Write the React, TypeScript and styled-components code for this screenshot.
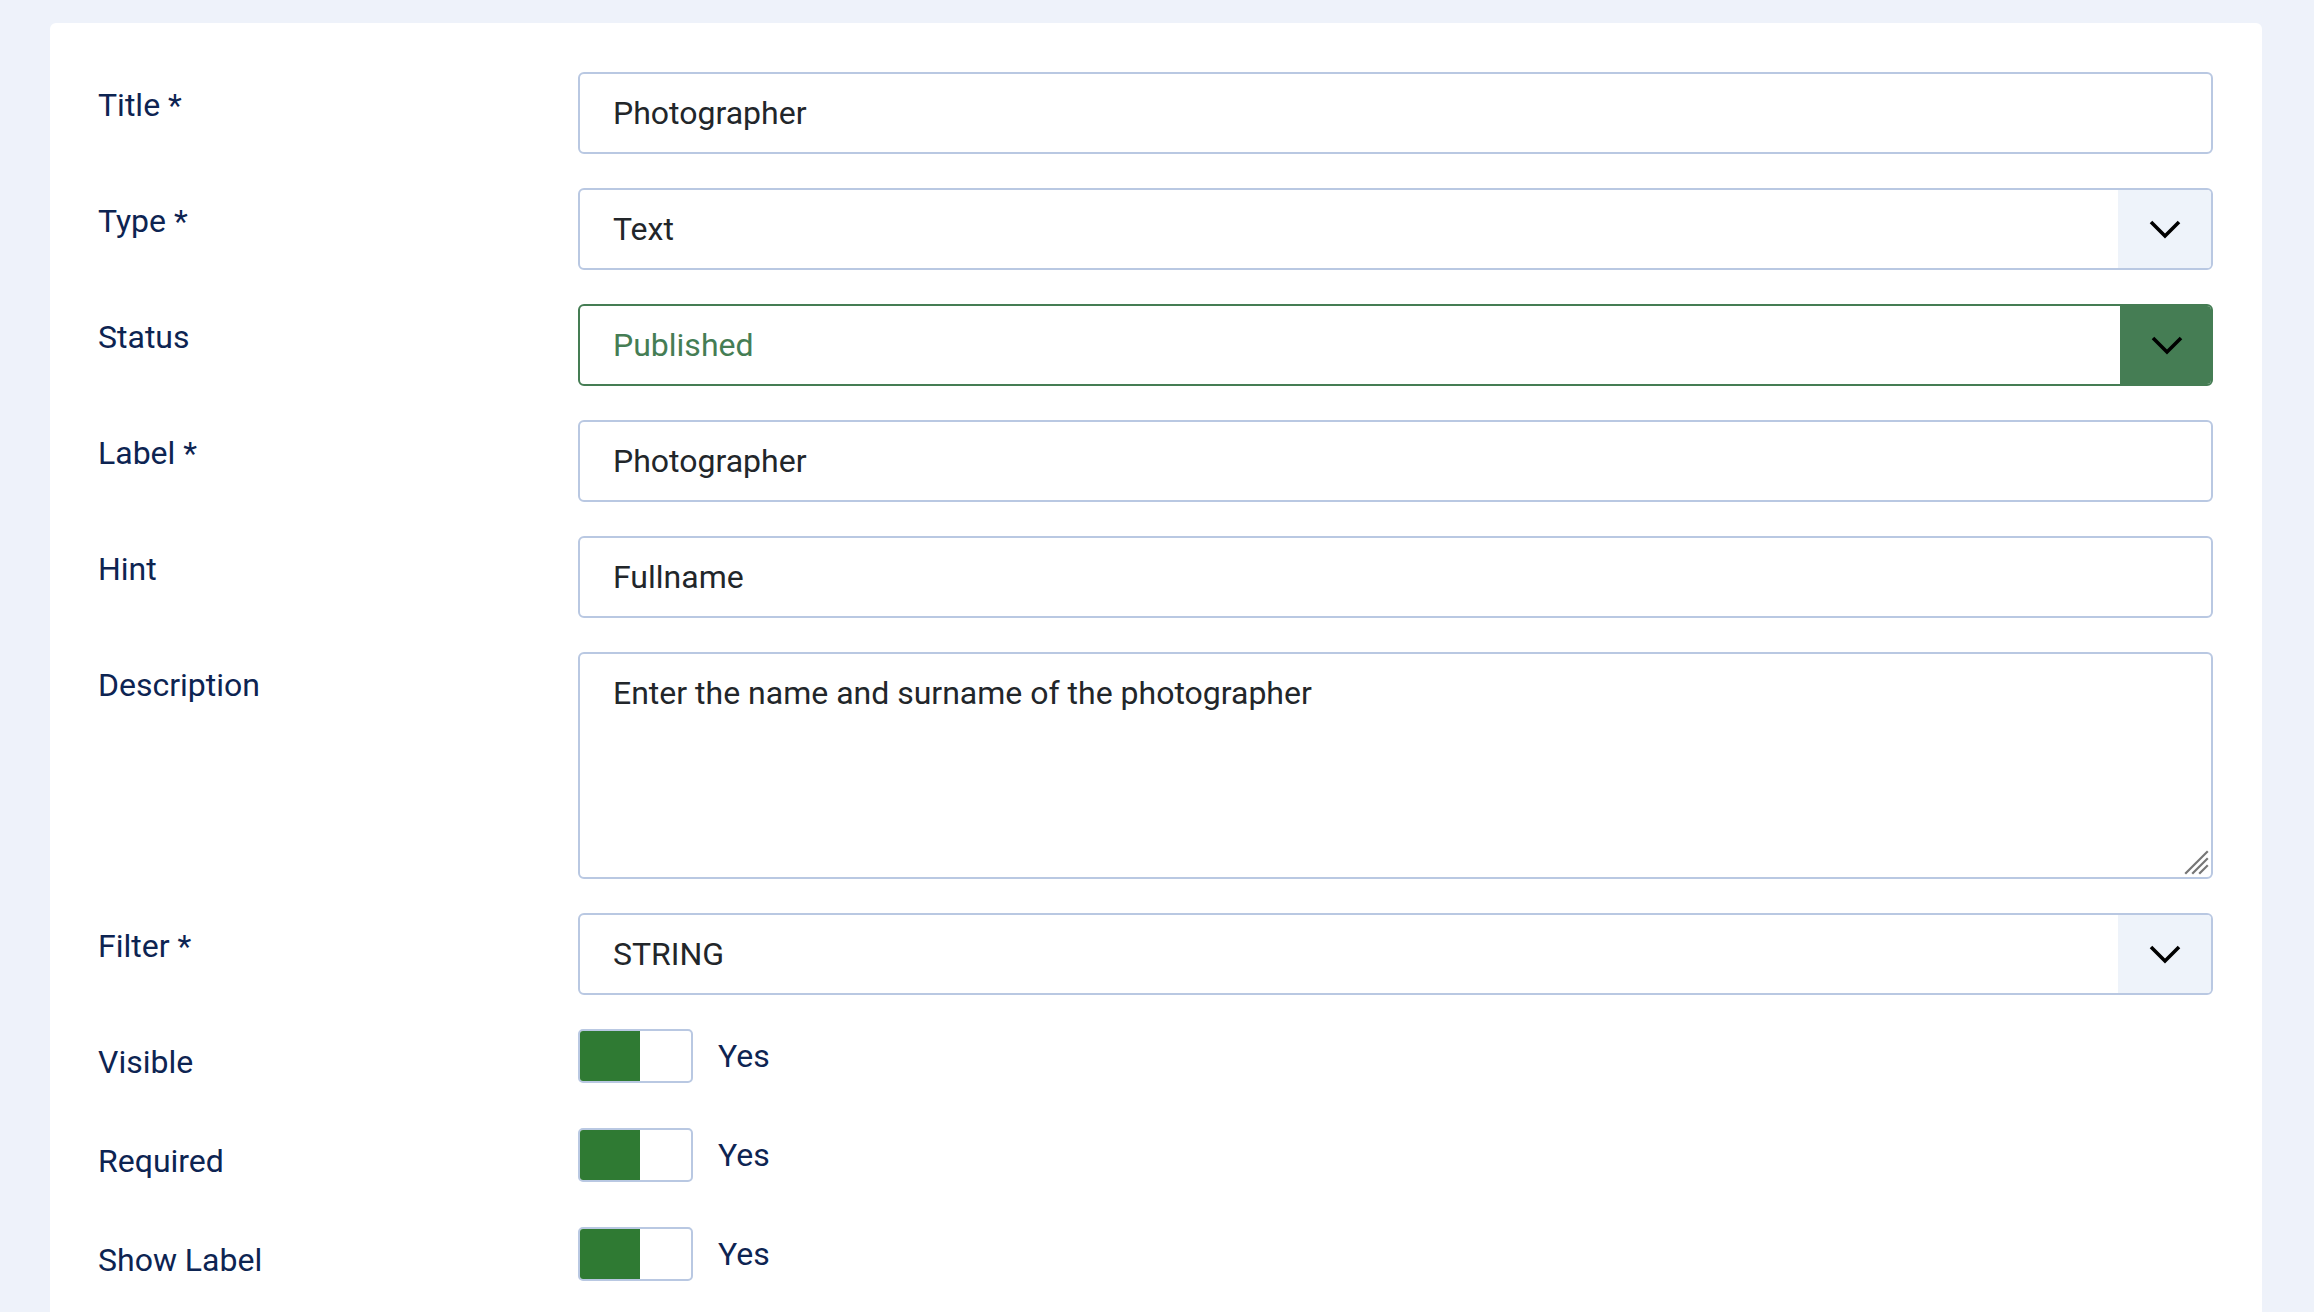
import React from 'react'
import styled, { createGlobalStyle } from 'styled-components';

const GlobalStyle = createGlobalStyle`
	html, body {
		margin: 0;
		padding: 0;
		background: #eef2fa;
		font-family: Roboto, "Liberation Sans", sans-serif;
	}
	* {
		box-sizing: border-box;
	}
`;

const Page = styled.div`
	padding: 23px 52px 0 50px;
	min-height: 1312px;
`;

const Card = styled.div`
	background: #fff;
	border-radius: 6px 6px 0 0;
	padding: 49px 49px 40px 48px;
	min-height: 1289px;
`;

const Row = styled.div`
	display: grid;
	grid-template-columns: 480px 1fr;
	margin-bottom: 34px;
`;

const Label = styled.label`
	font-size: 32px;
	line-height: 48px;
	color: #0d2452;
	padding-top: 9px;
`;

const Input = styled.input`
	width: 100%;
	height: 82px;
	border: 2px solid #b9c8e2;
	border-radius: 6px;
	padding: 15px 33px;
	font-family: inherit;
	font-size: 32px;
	line-height: 48px;
	color: #22262a;
	background: #fff;
	outline: none;
`;

const AreaWrap = styled.div`
	position: relative;
`;

const TextArea = styled.textarea`
	display: block;
	width: 100%;
	height: 227px;
	border: 2px solid #b9c8e2;
	border-radius: 6px;
	padding: 15px 33px;
	font-family: inherit;
	font-size: 32px;
	line-height: 48px;
	color: #22262a;
	background: #fff;
	outline: none;
	resize: none;
`;

const Grip = styled.svg`
	position: absolute;
	right: 4px;
	bottom: 4px;
	pointer-events: none;
`;

const SelectBox = styled.div<{ $active?: boolean }>`
	display: flex;
	height: 82px;
	border: 2px solid ${p => p.$active ? '#457d54' : '#b9c8e2'};
	border-radius: 6px;
	overflow: hidden;
	background: #fff;
`;

const SelectValue = styled.div<{ $active?: boolean }>`
	flex: 1;
	padding: 15px 33px;
	font-size: 32px;
	line-height: 48px;
	color: ${p => p.$active ? '#457d54' : '#22262a'};
`;

const SelectButton = styled.div<{ $active?: boolean }>`
	width: 93px;
	display: flex;
	align-items: center;
	justify-content: center;
	background: ${p => p.$active ? '#457d54' : '#eef3fa'};
	margin: ${p => p.$active ? '-2px -2px -2px 0' : '0'};
`;

const SwitchWrap = styled.div`
	display: flex;
	align-items: center;
	gap: 25px;
	height: 65px;
	align-self: start;
`;

const SwitchTrack = styled.div`
	display: flex;
	width: 115px;
	height: 54px;
	margin-top: -11px;
	border: 2px solid #b9c8e2;
	border-radius: 5px;
	overflow: hidden;
	background: #fff;
`;

const SwitchOn = styled.div`
	width: 60px;
	background: #2f7a33;
`;

const SwitchText = styled.span`
	font-size: 32px;
	line-height: 48px;
	margin-top: -11px;
	color: #0d2452;
`;

const Chevron = () => (
	<svg width="32" height="20" viewBox="0 0 32 20">
		<polyline points="2,3 16,17 30,3" fill="none" stroke="#000" strokeWidth="3.6" />
	</svg>
)

// resize grip drawn in the textarea's corner
const ResizeGrip = () => (
	<Grip width="26" height="26" viewBox="0 0 26 26">
		<g stroke="#767676" strokeWidth="2.2" strokeLinecap="square">
			<line x1="24" y1="3" x2="3" y2="24" />
			<line x1="24" y1="10" x2="10" y2="24" />
			<line x1="24" y1="17" x2="17" y2="24" />
		</g>
	</Grip>
)

interface SelectProps {
	value: string;
	active?: boolean;
}

const Select: React.FC<SelectProps> = ({ value, active }) => (
	<SelectBox $active={active}>
		<SelectValue $active={active}>{value}</SelectValue>
		<SelectButton $active={active}><Chevron /></SelectButton>
	</SelectBox>
)

const Switch: React.FC<{ label: string }> = ({ label }) => (
	<SwitchWrap>
		<SwitchTrack><SwitchOn /></SwitchTrack>
		<SwitchText>{label}</SwitchText>
	</SwitchWrap>
)

const switches = ['Visible', 'Required', 'Show Label']

export default function App() {
	return (
		<Page>
			<GlobalStyle />
			<Card>
				<Row>
					<Label>Title *</Label>
					<Input defaultValue="Photographer" />
				</Row>
				<Row>
					<Label>Type *</Label>
					<Select value="Text" />
				</Row>
				<Row>
					<Label>Status</Label>
					<Select value="Published" active />
				</Row>
				<Row>
					<Label>Label *</Label>
					<Input defaultValue="Photographer" />
				</Row>
				<Row>
					<Label>Hint</Label>
					<Input defaultValue="Fullname" />
				</Row>
				<Row>
					<Label>Description</Label>
					<AreaWrap>
						<TextArea defaultValue="Enter the name and surname of the photographer" />
						<ResizeGrip />
					</AreaWrap>
				</Row>
				<Row>
					<Label>Filter *</Label>
					<Select value="STRING" />
				</Row>
				{switches.map(name => (
					<Row key={name}>
						<Label>{name}</Label>
						<Switch label="Yes" />
					</Row>
				))}
			</Card>
		</Page>
	);
}
